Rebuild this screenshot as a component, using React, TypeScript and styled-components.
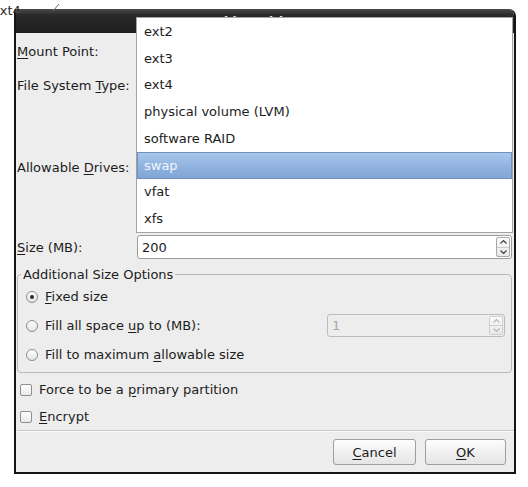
import React from "react";
import styled, { createGlobalStyle } from "styled-components";

const GlobalStyle = createGlobalStyle`
  html, body {
    margin: 0;
    padding: 0;
    background: #ffffff;
  }
  body {
    font-family: "DejaVu Sans", "Liberation Sans", sans-serif;
    font-size: 13px;
    line-height: 15px;
    color: #1c1c1c;
  }
  * {
    box-sizing: border-box;
  }
`;

const Screen = styled.div`
  position: relative;
  width: 528px;
  height: 487px;
  overflow: hidden;
  background: #ffffff;
  padding: 9px 0 0 14px;
`;

const Stray = styled.div`
  position: absolute;
  left: -8px;
  top: 3px;
  color: #2a2a2a;
  white-space: nowrap;
`;

const StrayMarks = styled.svg`
  position: absolute;
  left: 0;
  top: 0;
`;

const Dialog = styled.div`
  width: 502px;
  height: 465px;
  display: flex;
  flex-direction: column;
  background: #ededed;
  border: 2px solid #151515;
  border-top: none;
  border-radius: 2px 7px 0 0;
  overflow: hidden;
`;

const TitleBar = styled.div`
  flex: none;
  height: 24px;
  display: flex;
  align-items: center;
  justify-content: center;
  padding: 3px 20px 0 0;
  background: linear-gradient(#4a4a4a, #2a2a2a 25%, #1e1e1e);
  color: #e8e8e8;
  font-weight: bold;
  font-size: 12px;
`;

const Body = styled.div`
  flex: 1;
  display: flex;
  flex-direction: column;
  padding: 4px 0 0 1px;
`;

const FormGrid = styled.div`
  display: grid;
  grid-template-columns: 120px 1fr;
  grid-template-rows: 28px 28px 124px 24px;
  row-gap: 6px;
  margin-right: 2px;
`;

const Label = styled.div`
  grid-column: 1;
  display: flex;
  align-items: center;
  white-space: nowrap;
`;

const Key = styled.span`
  text-decoration: underline;
  text-underline-offset: 2px;
`;

const SpinBox = styled.div<{ $disabled?: boolean; $w?: number; $h: number }>`
  display: flex;
  align-items: stretch;
  width: ${(p) => (p.$w ? `${p.$w}px` : "auto")};
  height: ${(p) => p.$h}px;
  margin-left: ${(p) => (p.$w ? "auto" : "0")};
  border: 1px solid ${(p) => (p.$disabled ? "#bcbcbc" : "#9c9c9c")};
  border-radius: 3px;
  background: ${(p) => (p.$disabled ? "#ededed" : "#ffffff")};
  color: ${(p) => (p.$disabled ? "#a8a8a8" : "#1c1c1c")};
`;

const SpinValue = styled.div`
  flex: 1;
  display: flex;
  align-items: center;
  padding-left: 4px;
`;

const SpinButtons = styled.div<{ $disabled?: boolean }>`
  width: 14px;
  margin: 1px;
  display: flex;
  flex-direction: column;
  border: 1px solid ${(p) => (p.$disabled ? "#cfcfcf" : "#a9a9a9")};
  border-radius: 2px;
  background: linear-gradient(#fbfbfb, #e9e9e9);
  color: ${(p) => (p.$disabled ? "#b4b4b4" : "#3a3a3a")};
`;

const SpinHalf = styled.div`
  flex: 1;
  display: flex;
  align-items: center;
  justify-content: center;
  & + & {
    border-top: 1px solid #cdcdcd;
  }
`;

const Frame = styled.fieldset`
  margin: 8px 2px 0 0;
  padding: 0 6px 3px 3px;
  min-width: 0;
  border: 1px solid #b9b9b9;
  border-radius: 4px;
`;

const Legend = styled.legend`
  padding: 0 2px;
  line-height: 15px;
`;

const OptionRow = styled.div`
  display: flex;
  align-items: center;
  gap: 7px;
  height: 29px;
  padding-left: 5px;
  white-space: nowrap;
`;

const Radio = styled.span<{ $checked?: boolean }>`
  position: relative;
  flex: none;
  width: 12px;
  height: 12px;
  border-radius: 50%;
  border: 1px solid #8d8d8d;
  background: linear-gradient(#ffffff, #e4e4e4);

  &::after {
    content: "";
    display: ${(p) => (p.$checked ? "block" : "none")};
    position: absolute;
    left: 3px;
    top: 3px;
    width: 4px;
    height: 4px;
    border-radius: 50%;
    background: #2b2b2b;
  }
`;

const CheckList = styled.div`
  display: flex;
  flex-direction: column;
  margin-top: 3px;
`;

const CheckRow = styled.div`
  display: flex;
  align-items: center;
  gap: 7px;
  height: 27px;
  padding-left: 3px;
`;

const CheckBox = styled.span`
  flex: none;
  width: 12px;
  height: 12px;
  border: 1px solid #8f8f8f;
  border-radius: 2px;
  background: linear-gradient(#ffffff, #e8e8e8);
`;

const Separator = styled.div`
  height: 2px;
  border-top: 1px solid #c7c7c7;
  border-bottom: 1px solid #fafafa;
`;

const ButtonRow = styled.div`
  display: flex;
  justify-content: flex-end;
  gap: 9px;
  margin-top: 7px;
  padding-right: 8px;
`;

const Button = styled.button<{ $w: number }>`
  width: ${(p) => p.$w}px;
  height: 26px;
  padding: 0;
  font: inherit;
  color: #1c1c1c;
  border: 1px solid #9e9e9e;
  border-radius: 3px;
  background: linear-gradient(#fdfdfd, #e5e5e5);
`;

const Popup = styled.ul`
  position: absolute;
  left: 136px;
  top: 17px;
  width: 377px;
  margin: 0;
  padding: 0;
  list-style: none;
  background: #ffffff;
  border: 1px solid #a2a2a2;
`;

const PopupItem = styled.li<{ $selected?: boolean }>`
  height: 26.75px;
  display: flex;
  align-items: center;
  padding-left: 7px;
  color: ${(p) => (p.$selected ? "#f1f5fc" : "#1c1c1c")};
  background: ${(p) =>
    p.$selected ? "linear-gradient(#abc8ec, #8fb2de 55%, #7fa5d7)" : "transparent"};
  box-shadow: ${(p) => (p.$selected ? "inset 0 0 0 1px #6f91c0" : "none")};
`;

function Chevron({ up }: { up?: boolean }) {
  return (
    <svg width="7" height="4" viewBox="0 0 7 4">
      <path
        d={up ? "M0.5 3.5 L3.5 0.5 L6.5 3.5" : "M0.5 0.5 L3.5 3.5 L6.5 0.5"}
        fill="none"
        stroke="currentColor"
        strokeWidth="1.1"
      />
    </svg>
  );
}

function Spin({ value, disabled, w, h }: { value: string; disabled?: boolean; w?: number; h: number }) {
  return (
    <SpinBox $disabled={disabled} $w={w} $h={h}>
      <SpinValue>{value}</SpinValue>
      <SpinButtons $disabled={disabled}>
        <SpinHalf>
          <Chevron up />
        </SpinHalf>
        <SpinHalf>
          <Chevron />
        </SpinHalf>
      </SpinButtons>
    </SpinBox>
  );
}

const fsTypes = [
  "ext2",
  "ext3",
  "ext4",
  "physical volume (LVM)",
  "software RAID",
  "swap",
  "vfat",
  "xfs",
];

export default function App() {
  return (
    <>
      <GlobalStyle />
      <Screen>
        <Stray>ext4</Stray>
        <StrayMarks width="70" height="16" viewBox="0 0 70 16">
          <path d="M15 11.5 L20 12.5" stroke="#555" strokeWidth="1" fill="none" />
          <path d="M53 11 L59 4" stroke="#666" strokeWidth="1" fill="none" />
        </StrayMarks>
        <Dialog>
          <TitleBar>Add Partition</TitleBar>
          <Body>
            <FormGrid>
              <Label>
                <span>
                  <Key>M</Key>ount Point:
                </span>
              </Label>
              <Label>
                <span>
                  File System <Key>T</Key>ype:
                </span>
              </Label>
              <Label>
                <span>
                  Allowable <Key>D</Key>rives:
                </span>
              </Label>
              <Label>
                <span>
                  <Key>S</Key>ize (MB):
                </span>
              </Label>
              <Spin value="200" h={24} />
            </FormGrid>
            <Frame>
              <Legend>Additional Size Options</Legend>
              <OptionRow>
                <Radio $checked />
                <span>
                  <Key>F</Key>ixed size
                </span>
              </OptionRow>
              <OptionRow>
                <Radio />
                <span>
                  Fill all space <Key>u</Key>p to (MB):
                </span>
                <Spin value="1" disabled w={178} h={23} />
              </OptionRow>
              <OptionRow>
                <Radio />
                <span>
                  Fill to maximum <Key>a</Key>llowable size
                </span>
              </OptionRow>
            </Frame>
            <CheckList>
              <CheckRow>
                <CheckBox />
                <span>
                  Force to be a <Key>p</Key>rimary partition
                </span>
              </CheckRow>
              <CheckRow>
                <CheckBox />
                <span>
                  <Key>E</Key>ncrypt
                </span>
              </CheckRow>
            </CheckList>
            <Separator />
            <ButtonRow>
              <Button $w={83}>
                <Key>C</Key>ancel
              </Button>
              <Button $w={81}>
                <Key>O</Key>K
              </Button>
            </ButtonRow>
          </Body>
        </Dialog>
        <Popup>
          {fsTypes.map((t) => (
            <PopupItem key={t} $selected={t === "swap"}>
              {t}
            </PopupItem>
          ))}
        </Popup>
      </Screen>
    </>
  );
}
